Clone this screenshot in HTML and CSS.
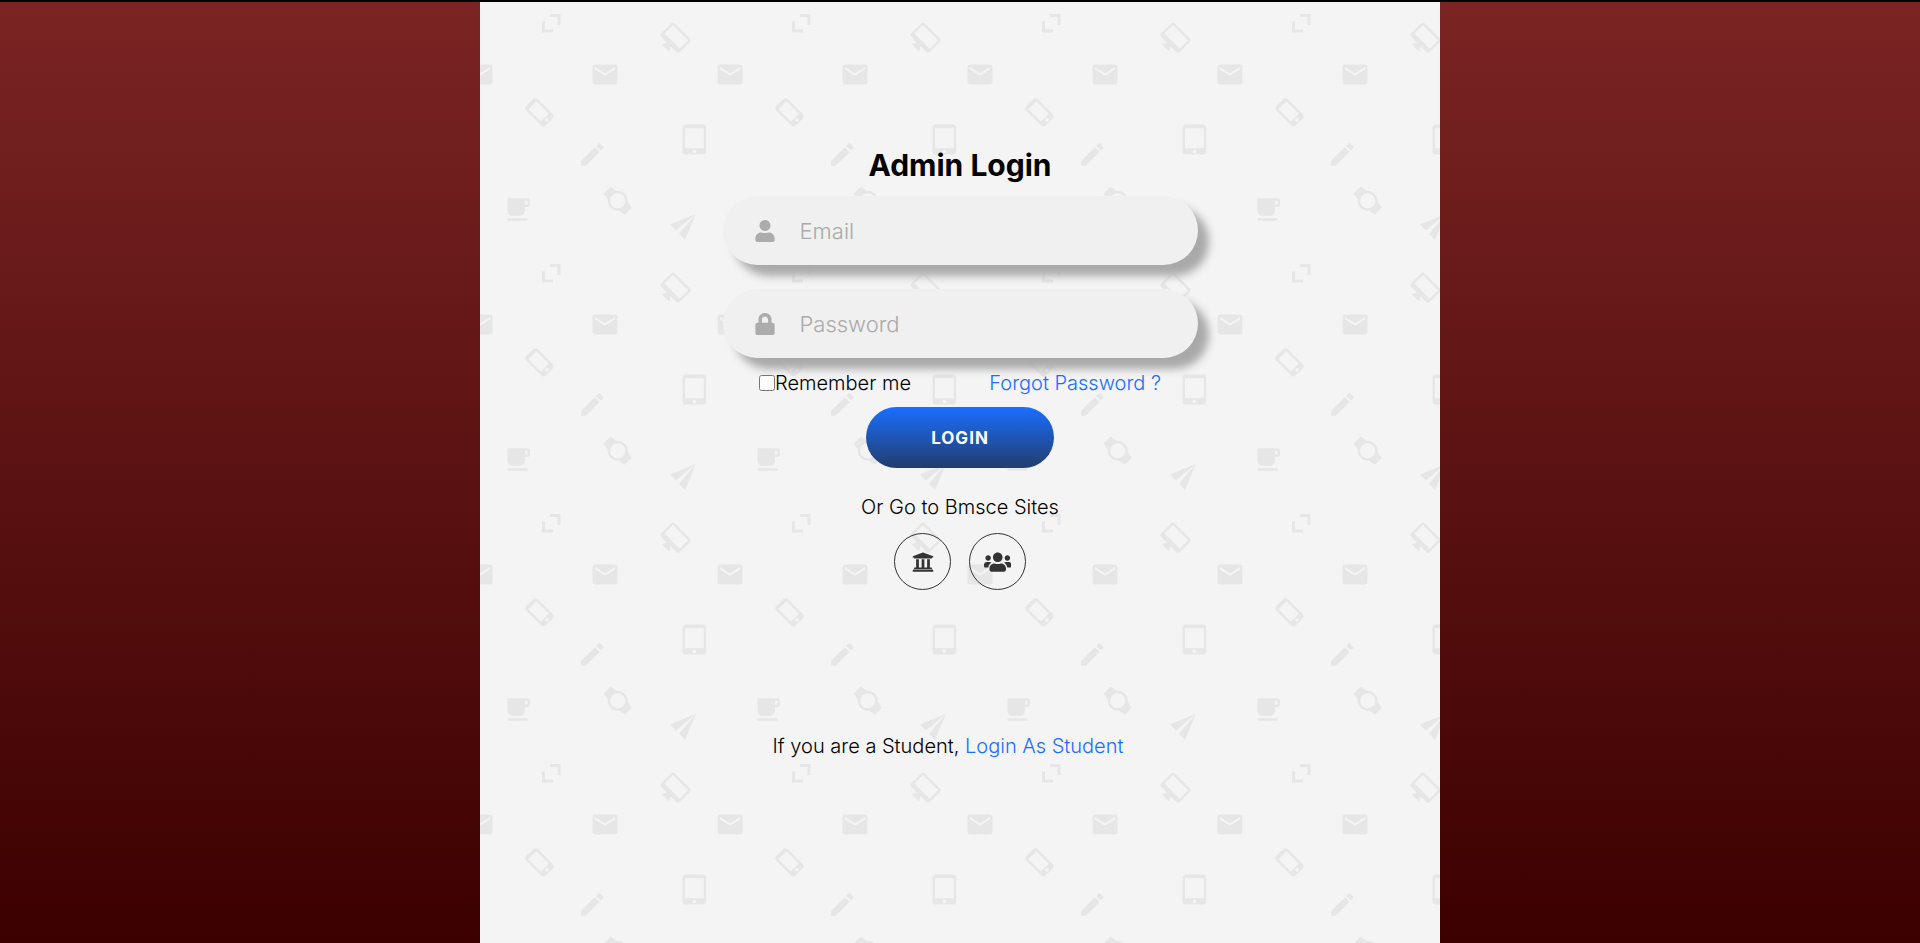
FILE: index.html
```html
<!DOCTYPE html>
<html lang="en">
<head>
<meta charset="utf-8">
<meta name="viewport" content="width=device-width, initial-scale=1">
<title>Admin Login</title>
<link rel="stylesheet" href="styles.css">
</head>
<body>
<main class="panel">
  <svg class="panel-pattern" aria-hidden="true">
    <defs>
      <pattern id="doodles" width="250" height="250" patternUnits="userSpaceOnUse">
        <g fill="#e6e6e6">
          <path d="M70 14h10.500v11h-3v-8h-7.500zM62 21.500h3v8h8v3h-11z"/>
          <path transform="translate(195.500 37.700) rotate(45) scale(1.200) translate(-12 -10)" d="M21 2H3c-1.100 0-2 .9-2 2v12c0 1.100.9 2 2 2h7l-2 3v1h8v-1l-2-3h7c1.100 0 2-.9 2-2V4c0-1.100-.9-2-2-2zm0 12H3V4h18v10z"/>
          <path transform="translate(-15 59.500) scale(1.250)" d="M20 4H4c-1.100 0-2 .9-2 2v12c0 1.100.9 2 2 2h16c1.100 0 2-.9 2-2V6c0-1.100-.9-2-2-2zm0 4l-8 5-8-5V6l8 5 8-5v2z"/>
          <path transform="translate(110 59.500) scale(1.250)" d="M20 4H4c-1.100 0-2 .9-2 2v12c0 1.100.9 2 2 2h16c1.100 0 2-.9 2-2V6c0-1.100-.9-2-2-2zm0 4l-8 5-8-5V6l8 5 8-5v2z"/>
          <path transform="translate(235 59.500) scale(1.250)" d="M20 4H4c-1.100 0-2 .9-2 2v12c0 1.100.9 2 2 2h16c1.100 0 2-.9 2-2V6c0-1.100-.9-2-2-2zm0 4l-8 5-8-5V6l8 5 8-5v2z"/>
          <path transform="translate(59.500 112.300) rotate(-45) scale(1.250) translate(-11.500 -12)" d="M15.500 1h-8C6.120 1 5 2.120 5 3.500v17C5 21.880 6.120 23 7.500 23h8c1.380 0 2.500-1.120 2.500-2.500v-17C18 2.120 16.880 1 15.500 1zm-4 21c-.83 0-1.500-.67-1.500-1.500s.67-1.500 1.500-1.500 1.500.67 1.500 1.500-.67 1.500-1.500 1.500zm4.500-4H7V4h9v14z"/>
          <path transform="translate(200 124.500) scale(1.250)" d="M18.500 0h-14C3.120 0 2 1.120 2 2.500v19C2 22.880 3.120 24 4.500 24h14c1.380 0 2.500-1.120 2.500-2.500v-19C21 1.120 19.880 0 18.500 0zm-7 23c-.83 0-1.500-.67-1.500-1.500s.67-1.500 1.500-1.500 1.500.67 1.500 1.500-.67 1.500-1.500 1.500zm7.500-4H4V3h15v16z"/>
          <path transform="translate(97.300 139.500) scale(1.250)" d="M3 17.250V21h3.750L17.810 9.940l-3.750-3.750L3 17.250zM20.710 7.040c.39-.39.39-1.020 0-1.410l-2.340-2.340c-.39-.39-1.020-.39-1.410 0l-1.830 1.830 3.750 3.750 1.830-1.830z"/>
          <path transform="translate(22.500 194.400) scale(1.250)" d="M20 3H4v10c0 2.210 1.790 4 4 4h6c2.210 0 4-1.790 4-4v-3h2c1.110 0 2-.89 2-2V5c0-1.110-.89-2-2-2zm0 5h-2V5h2v3zM4 21h16v-2H4v2z"/>
          <path transform="translate(137.700 200.700) rotate(-45) scale(1.250) translate(-12 -12)" d="M20 12c0-2.540-1.190-4.810-3.040-6.270L16 0H8l-.95 5.730C5.190 7.190 4 9.450 4 12s1.190 4.810 3.050 6.270L8 24h8l.96-5.730C18.810 16.810 20 14.540 20 12zM6 12c0-3.310 2.690-6 6-6s6 2.690 6 6-2.690 6-6 6-6-2.690-6-6z"/>
          <path d="M190 224.500L216 213.700 196 230.500zM216 213.700L205 240 199 233.700z"/>
        </g>
      </pattern>
    </defs>
    <rect width="100%" height="100%" fill="url(#doodles)"/>
  </svg>

  <form class="login">
    <h1 class="title">Admin Login</h1>

    <div class="fields">
      <label class="field">
        <svg class="field-icon" viewBox="0 0 448 512" aria-hidden="true"><path d="M224 256c70.700 0 128-57.300 128-128S294.700 0 224 0 96 57.300 96 128s57.300 128 128 128zm89.600 32h-16.700c-22.200 10.200-46.900 16-72.900 16s-50.600-5.800-72.900-16h-16.700C60.200 288 0 348.200 0 422.400V464c0 26.500 21.500 48 48 48h352c26.500 0 48-21.500 48-48v-41.600c0-74.200-60.200-134.400-134.400-134.400z"/></svg>
        <input class="field-input" type="email" placeholder="Email" aria-label="Email">
      </label>
      <label class="field">
        <svg class="field-icon" viewBox="0 0 448 512" aria-hidden="true"><path d="M400 224h-24v-72C376 68.200 307.800 0 224 0S72 68.200 72 152v72H48c-26.500 0-48 21.500-48 48v192c0 26.500 21.500 48 48 48h352c26.500 0 48-21.500 48-48V272c0-26.500-21.500-48-48-48zm-104 0H152v-72c0-39.700 32.300-72 72-72s72 32.300 72 72v72z"/></svg>
        <input class="field-input" type="password" placeholder="Password" aria-label="Password">
      </label>
    </div>

    <div class="options">
      <label class="remember"><input class="remember-box" type="checkbox">Remember me</label>
      <a class="link" href="#">Forgot Password ?</a>
    </div>

    <button class="submit" type="submit">LOGIN</button>

    <p class="sites-label">Or Go to Bmsce Sites</p>
    <nav class="sites">
      <a class="site" href="#" aria-label="College site"><svg class="site-icon" viewBox="0 0 512 512" aria-hidden="true"><path d="M496 128v16a8 8 0 0 1-8 8h-24v12c0 6.627-5.373 12-12 12H60c-6.627 0-12-5.373-12-12v-12H24a8 8 0 0 1-8-8v-16a8 8 0 0 1 4.941-7.392l232-88a7.996 7.996 0 0 1 6.118 0l232 88A8 8 0 0 1 496 128zm-24 304H40c-13.255 0-24 10.745-24 24v16a8 8 0 0 0 8 8h464a8 8 0 0 0 8-8v-16c0-13.255-10.745-24-24-24zM96 192v192H60c-6.627 0-12 5.373-12 12v20h416v-20c0-6.627-5.373-12-12-12h-36V192h-64v192h-64V192h-64v192h-64V192H96z"/></svg></a>
      <a class="site" href="#" aria-label="Community site"><svg class="site-icon" viewBox="0 0 640 512" aria-hidden="true"><path d="M96 224c35.300 0 64-28.700 64-64s-28.700-64-64-64-64 28.700-64 64 28.700 64 64 64zm448 0c35.300 0 64-28.700 64-64s-28.700-64-64-64-64 28.700-64 64 28.700 64 64 64zm32 32h-64c-17.600 0-33.500 7.100-45.100 18.600 40.300 22.100 68.900 62 75.100 109.400h66c17.700 0 32-14.300 32-32v-32c0-35.300-28.700-64-64-64zm-256 0c61.900 0 112-50.100 112-112S381.900 32 320 32 208 82.100 208 144s50.100 112 112 112zm76.800 32h-8.300c-20.800 10-43.900 16-68.500 16s-47.600-6-68.500-16h-8.300C179.600 288 128 339.600 128 403.200V432c0 26.500 21.500 48 48 48h288c26.500 0 48-21.500 48-48v-28.800c0-63.600-51.600-115.200-115.200-115.200zm-223.700-13.400C161.500 263.100 145.600 256 128 256H64c-35.300 0-64 28.700-64 64v32c0 17.700 14.300 32 32 32h65.900c6.300-47.400 34.900-87.300 75.200-109.400z"/></svg></a>
    </nav>

    <p class="student">If you are a Student, <a class="link" href="#">Login As Student</a></p>
  </form>
</main>
</body>
</html>
```
FILE: styles.css
```css
* {
  box-sizing: border-box;
}

body {
  margin: 0;
  min-height: 100vh;
  display: flex;
  justify-content: center;
  border-top: 2px solid #000;
  background: linear-gradient(#7b2424, #3c0000);
  color: #000;
  font-family: "Century Gothic", Inter, "Liberation Sans", sans-serif;
  font-size: 20px;
  font-weight: 300;
  line-height: 24px;
}

.panel {
  position: relative;
  width: 50%;
  min-width: 500px;
  background: #f4f4f4;
}

.panel-pattern {
  position: absolute;
  top: -2px;
  left: 0;
  width: 100%;
  height: calc(100% + 2px);
  clip-path: inset(2px 0 0 0);
}

.login {
  position: relative;
  display: flex;
  flex-direction: column;
  align-items: center;
  padding: 143px 12px 40px;
}

.title {
  margin: 0 0 11px;
  font-size: 30px;
  font-weight: 700;
  line-height: 40px;
}

.fields {
  display: flex;
  flex-direction: column;
  gap: 24px;
  width: 100%;
  max-width: 475px;
}

.field {
  display: flex;
  align-items: center;
  gap: 25px;
  height: 69px;
  padding: 0 32px;
  border-radius: 35px;
  background: #f0f0f0;
  box-shadow: 11px 11px 8px #a9a9a9;
}

.field-icon {
  flex: none;
  width: 20px;
  height: 22px;
  fill: #acacac;
}

.field-input {
  flex: 1;
  min-width: 0;
  padding: 0;
  border: 0;
  outline: 0;
  background: none;
  color: #333;
  font: inherit;
  font-size: 22px;
  line-height: 28px;
}

.field-input::placeholder {
  color: #aaa;
  opacity: 1;
}

.options {
  display: flex;
  justify-content: space-between;
  width: 100%;
  max-width: 402px;
  margin-top: 13px;
}

.remember {
  display: flex;
  align-items: center;
}

.remember-box {
  width: 16px;
  height: 16px;
  margin: 0;
}

.link {
  color: #1a6dff;
  text-decoration: none;
}

.submit {
  width: 188px;
  height: 61px;
  margin-top: 12px;
  border: 0;
  border-radius: 31px;
  background: linear-gradient(#1a6fff, #233c6c);
  color: #fff;
  font: inherit;
  font-size: 17px;
  font-weight: 700;
  letter-spacing: 1px;
}

.sites-label {
  margin: 27px 0 14px;
}

.sites {
  display: flex;
  gap: 18px;
}

.site {
  display: flex;
  align-items: center;
  justify-content: center;
  width: 57px;
  height: 57px;
  border: 1px solid #333;
  border-radius: 50%;
}

.site-icon {
  height: 22px;
  fill: #333;
}

.student {
  margin: 144px 0 0;
  padding-right: 24px;
}
```
